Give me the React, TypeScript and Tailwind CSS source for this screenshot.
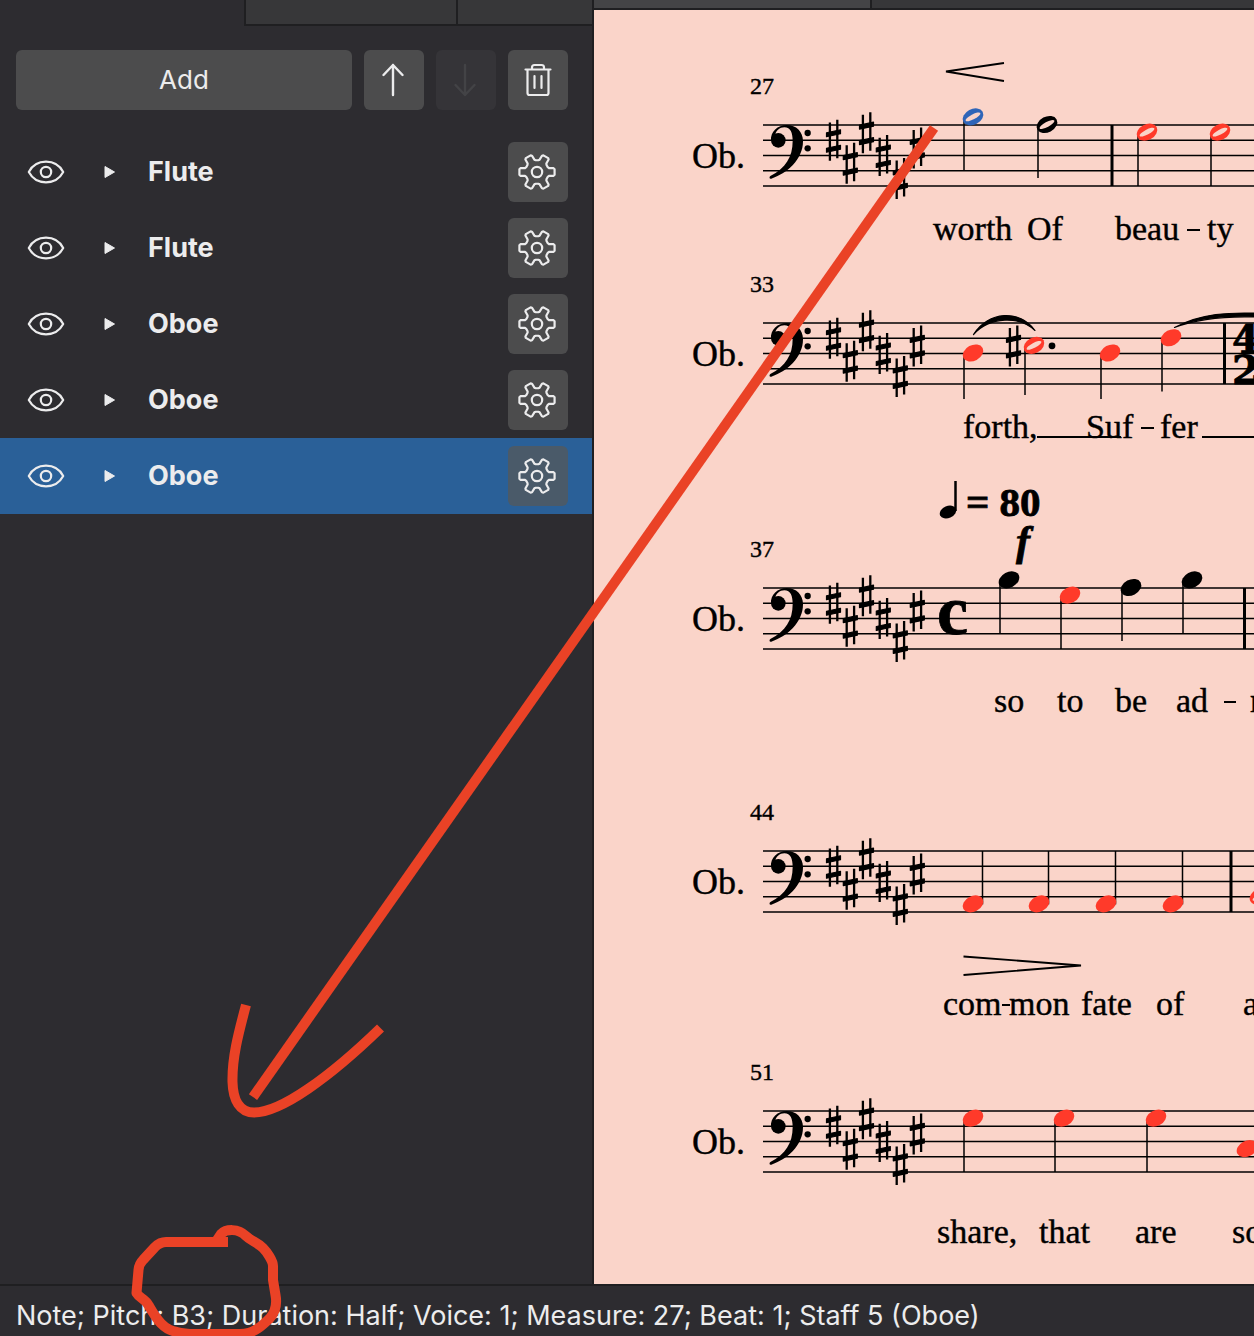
import React from "react";

type Tone = "black" | "red" | "blue";
type Note = { x: number; step: number; tone: Tone; half?: boolean; stem: number; up?: boolean };
type Word = { x: number; text: string };
type Rule = { x1: number; x2: number; y: number };

const TONES: Record<Tone, string> = { black: "#000000", red: "#ff3a2a", blue: "#2f65b8" };
const SPACE = 15.25;
const stepY = (step: number) => (step * SPACE) / 2;

/* ---------- interface icons ---------- */

const GEAR_POINTS = Array.from({ length: 6 }, (_, k) => {
  const at = (deg: number, r: number) => {
    const a = ((k * 60 + deg) * Math.PI) / 180;
    return `${(r * Math.cos(a)).toFixed(2)},${(r * Math.sin(a)).toFixed(2)}`;
  };
  return [at(-13, 17), at(-9, 17.8), at(9, 17.8), at(13, 17), at(18, 12.6), at(24, 11.8), at(36, 11.8), at(42, 12.6)].join(" ");
}).join(" ");

function GearIcon() {
  return (
    <svg width="40" height="40" viewBox="-19 -20 40 40" fill="none" stroke="#ececed" strokeWidth="2.200" strokeLinejoin="round">
      <polygon points={GEAR_POINTS} />
      <circle r="5.2" />
    </svg>
  );
}

function EyeIcon() {
  return (
    <svg width="40" height="28" viewBox="-20 -14 40 28" fill="none" stroke="#ececed" strokeWidth="2.200" strokeLinejoin="round">
      <path d="M-17.200 0C-14 -6 -8 -10.300 0 -10.300S14 -6 17.200 0C14 6 8 10.300 0 10.300S-14 6 -17.200 0Z" />
      <circle r="5.2" />
    </svg>
  );
}

function ArrowIcon({ down }: { down?: boolean }) {
  return (
    <svg width="24" height="34" viewBox="-11 -17 24 34" fill="none" stroke={down ? "#434346" : "#ececed"} strokeWidth="2.400" strokeLinecap="round" strokeLinejoin="round">
      {down ? <path d="M0 -15V15M-9.500 5L0 15L9.500 5" /> : <path d="M0 15V-15M-9.500 -5L0 -15L9.500 -5" />}
    </svg>
  );
}

function TrashIcon() {
  return (
    <svg width="30" height="34" viewBox="-15 -17 30 34" fill="none" stroke="#ececed" strokeWidth="2.200" strokeLinecap="round" strokeLinejoin="round">
      <path d="M-12.500 -10.500H12.500M-10.500 -10.500V13Q-10.500 15 -8.500 15H8.500Q10.500 15 10.500 13V-10.500M-6 -11V-12.500Q-6 -15 -3.500 -15H3.500Q6 -15 6 -12.500V-11M-3.500 -4V8M3.500 -4V8" />
    </svg>
  );
}

/* ---------- score glyphs ---------- */

function Clef() {
  return (
    <g transform="translate(161 -18) scale(0.3333)">
      <path d="M48 100C46 74 68 54 95 54C124 54 144 74 144 103C144 158 95 200 49 215C43 217 42 210 46 207C92 184 113 150 113 102C113 78 107 61 88 61C74 61 63 71 61 83Z" />
      <circle cx="70" cy="100" r="22" />
      <circle cx="158" cy="78" r="9.500" />
      <circle cx="158" cy="124" r="9.500" />
    </g>
  );
}

function Sharp({ x, y }: { x: number; y: number }) {
  return (
    <g transform={`translate(${x} ${y})`}>
      <path d="M-3.600 -17.800V20.500M3.800 -20.500V18" stroke="#000" strokeWidth="2.300" />
      <path d="M-7 -7.500L7 -10.500V-6.500L-7 -3.500ZM-7 8L7 5V9L-7 12Z" stroke="#000" strokeWidth="1.200" strokeLinejoin="round" />
    </g>
  );
}

function NoteMark({ note }: { note: Note }) {
  const y = stepY(note.step);
  const stemX = note.up ? note.x + 9.5 : note.x - 9;
  return (
    <g>
      <path d={`M${stemX} ${y}V${note.stem}`} stroke="#000" strokeWidth="1.500" />
      <g transform={`translate(${note.x} ${y - 0.5}) rotate(-28)`}>
        <ellipse rx="10.900" ry="7.800" fill={TONES[note.tone]} />
        {note.half && <ellipse rx="8.300" ry="2.500" fill="#fad4c9" />}
      </g>
    </g>
  );
}

const KEY_SIGNATURE = [
  [239.5, 2],
  [256.3, 5],
  [272.5, 1],
  [289.3, 4],
  [306.3, 7],
  [323.3, 3],
];

type SystemProps = {
  height: string;
  top: number;
  number: string;
  notes: Note[];
  bar?: number;
  lyricY: number;
  words: Word[];
  rules?: Rule[];
  children?: React.ReactNode;
};

function System({ height, top, number, notes, bar, lyricY, words, rules = [], children }: SystemProps) {
  return (
    <svg className={`block w-full shrink-0 overflow-hidden font-['Liberation_Serif',serif] ${height}`} role="img" aria-label={`Oboe, measure ${number}`}>
      <g transform={`translate(0 ${top})`}>
        {[0, 1, 2, 3, 4].map((i) => (
          <line key={i} x1="169" x2="100%" y1={i * SPACE} y2={i * SPACE} stroke="#000" strokeWidth="1.600" />
        ))}
        {bar && <line x1={bar} x2={bar} y1="0" y2={SPACE * 4} stroke="#000" strokeWidth="3" />}
        <Clef />
        {KEY_SIGNATURE.map(([x, step]) => (
          <Sharp key={x} x={x} y={stepY(step)} />
        ))}
        {notes.map((note) => (
          <NoteMark key={note.x} note={note} />
        ))}
        <g stroke="#000" strokeWidth="0.400">
          <text x="156" y="-31" fontSize="24">{number}</text>
          <text x="98" y="43" fontSize="36">Ob.</text>
          {words.map((word) => (
            <text key={word.x} x={word.x} y={lyricY} fontSize="34">{word.text}</text>
          ))}
        </g>
        {rules.map((rule) => (
          <line key={rule.x1} x1={rule.x1} x2={rule.x2} y1={rule.y} y2={rule.y} stroke="#000" strokeWidth="2" />
        ))}
        {children}
      </g>
    </svg>
  );
}

function Score() {
  return (
    <main className="flex min-h-0 flex-1 flex-col overflow-hidden bg-[#fad4c9]">
      <System
        height="h-[240px]"
        top={115}
        number="27"
        bar={518}
        lyricY={115}
        notes={[
          { x: 379, step: -1, tone: "blue", half: true, stem: 45.5 },
          { x: 453, step: 0, tone: "black", half: true, stem: 53 },
          { x: 553, step: 1, tone: "red", half: true, stem: 61 },
          { x: 626, step: 1, tone: "red", half: true, stem: 61 },
        ]}
        words={[{ x: 339, text: "worth" }, { x: 433, text: "Of" }, { x: 521, text: "beau" }, { x: 613, text: "ty" }]}
        rules={[{ x1: 593, x2: 606, y: 105 }]}
      >
        <path d="M410 -62L352 -53.500L410 -44" fill="none" stroke="#000" strokeWidth="1.800" />
      </System>
      <System
        height="h-[210px]"
        top={73}
        number="33"
        bar={630.5}
        lyricY={115}
        notes={[
          { x: 379, step: 4, tone: "red", stem: 76 },
          { x: 440, step: 3, tone: "red", half: true, stem: 72 },
          { x: 516, step: 4, tone: "red", stem: 76 },
          { x: 577, step: 2, tone: "red", stem: 68.5 },
        ]}
        words={[{ x: 369, text: "forth," }, { x: 492, text: "Suf" }, { x: 566, text: "fer" }]}
        rules={[
          { x1: 443, x2: 527, y: 114 },
          { x1: 547, x2: 560, y: 105 },
          { x1: 608, x2: 700, y: 114 },
        ]}
      >
        <Sharp x={419.5} y={stepY(3)} />
        <circle cx="458" cy="22.800" r="3.400" />
        <path d="M379.500 11.500C394 -12 426 -14 441 7.500C426 -7 396 -7 379.500 11.500Z" stroke="#000" strokeWidth="1.200" strokeLinejoin="round" />
        <path d="M580.500 4.500C606 -9 632 -12 680 -9V-5C640 -8 608 -6 580.500 4.500Z" stroke="#000" strokeWidth="1.200" strokeLinejoin="round" />
        <g className="font-['DejaVu_Serif',serif] font-bold" fontSize="40" stroke="#000" strokeWidth="0.800">
          <text x="638" y="30">4</text>
          <text x="638" y="61">2</text>
        </g>
      </System>
      <System
        height="h-[280px]"
        top={128}
        number="37"
        bar={650.5}
        lyricY={124}
        notes={[
          { x: 415, step: -1, tone: "black", stem: 45.5 },
          { x: 476, step: 1, tone: "red", stem: 61 },
          { x: 537, step: 0, tone: "black", stem: 53 },
          { x: 598, step: -1, tone: "black", stem: 45.5 },
        ]}
        words={[{ x: 400, text: "so" }, { x: 463, text: "to" }, { x: 521, text: "be" }, { x: 582, text: "ad" }, { x: 656, text: "mired" }]}
        rules={[{ x1: 630, x2: 642, y: 114 }]}
      >
        <g transform="translate(354 -76)">
          <ellipse rx="8.600" ry="6" transform="rotate(-24)" />
          <path d="M7.500 -1V-31" stroke="#000" strokeWidth="2.500" />
        </g>
        <g className="font-bold" stroke="#000" strokeWidth="0.800">
          <text x="372" y="-72" fontSize="41">= 80</text>
          <text x="422" y="-33" fontSize="42" className="italic">f</text>
          <text x="343" y="46" fontSize="70">c</text>
        </g>
      </System>
      <System
        height="h-[290px]"
        top={111}
        number="44"
        bar={637}
        lyricY={164}
        notes={[
          { x: 379, step: 7, tone: "red", stem: 0, up: true },
          { x: 445, step: 7, tone: "red", stem: 0, up: true },
          { x: 512, step: 7, tone: "red", stem: 0, up: true },
          { x: 579, step: 7, tone: "red", stem: 0, up: true },
          { x: 666, step: 6, tone: "red", half: true, stem: -8, up: true },
        ]}
        words={[{ x: 349, text: "com" }, { x: 415, text: "mon" }, { x: 487, text: "fate" }, { x: 562, text: "of" }, { x: 649, text: "a" }]}
        rules={[{ x1: 408, x2: 416, y: 154 }]}
      >
        <path d="M369.500 105.500L487 114.500L369.500 124" fill="none" stroke="#000" strokeWidth="1.800" />
      </System>
      <System
        height="h-[254px]"
        top={81}
        number="51"
        lyricY={132}
        notes={[
          { x: 379, step: 1, tone: "red", stem: 61 },
          { x: 470, step: 1, tone: "red", stem: 61 },
          { x: 562, step: 1, tone: "red", stem: 61 },
          { x: 653, step: 5, tone: "red", stem: -15, up: true },
        ]}
        words={[{ x: 343, text: "share," }, { x: 445, text: "that" }, { x: 541, text: "are" }, { x: 638, text: "so" }]}
      />
    </main>
  );
}

/* ---------- instruments panel ---------- */

const INSTRUMENTS = ["Flute", "Flute", "Oboe", "Oboe", "Oboe"];
const SELECTED = 4;

function InstrumentsPanel() {
  const square = "flex h-[60px] w-[60px] shrink-0 items-center justify-center rounded-md";
  return (
    <aside className="flex w-[594px] shrink-0 flex-col border-r-2 border-[#1f1f21] bg-[#2d2c30]">
      <div role="tablist" className="ml-[244px] flex h-[26px] shrink-0 border-b-2 border-l-2 border-[#1f1f21] bg-[#373739]">
        <button role="tab" aria-label="Palettes" className="w-[212px] border-r-2 border-[#1f1f21]" />
        <button role="tab" aria-label="Properties" className="flex-1" />
      </div>
      <div className="flex gap-3 py-6 pr-6 pl-4">
        <button className="h-[60px] flex-1 rounded-md bg-[#4c4c4d] text-[26px]">Add</button>
        <button aria-label="Move up" className={`${square} bg-[#4c4c4d]`}><ArrowIcon /></button>
        <button aria-label="Move down" disabled className={`${square} bg-[#353438]`}><ArrowIcon down /></button>
        <button aria-label="Delete" className={`${square} bg-[#4c4c4d]`}><TrashIcon /></button>
      </div>
      <ul>
        {INSTRUMENTS.map((name, i) => (
          <li key={i} className={`flex h-[76px] items-center pr-6 pl-[26px] ${i === SELECTED ? "bg-[#2a6098]" : ""}`}>
            <button aria-label={`Show ${name}`}><EyeIcon /></button>
            <button aria-label={`Expand ${name}`} className="ml-9 flex w-[46px] items-center">
              <svg width="16" height="16" viewBox="0 0 16 16" fill="#ececed" stroke="#ececed" strokeLinejoin="round">
                <path d="M3 2.500L12.500 8L3 13.500Z" />
              </svg>
            </button>
            <span className="flex-1 font-bold">{name}</span>
            <button aria-label={`${name} settings`} className={`${square} ${i === SELECTED ? "bg-[#4a5a69]" : "bg-[#4c4c4d]"}`}>
              <GearIcon />
            </button>
          </li>
        ))}
      </ul>
    </aside>
  );
}

function Annotations() {
  return (
    <svg aria-hidden="true" className="pointer-events-none absolute inset-0 h-full w-full" fill="none" stroke="#ea4226" strokeWidth="10">
      <path d="M934 128L253 1097" />
      <path d="M246 1005C238 1035 232 1058 232.500 1082C233 1100 240 1112.500 254 1112.500C281 1112.500 330 1077 380.500 1028" />
      <path
        strokeLinejoin="round"
        d="M228 1242H166Q160 1242 155 1247L143 1260Q139 1264 138.500 1270L136.500 1293C140 1299 145 1298 149 1306C157 1320 164 1330 177 1332Q184 1334 195 1334H240C254 1334 263 1325 270 1318C276 1311 277 1303 275.500 1295L273 1280V1266C273 1261 267 1252 263 1248C257 1242 251 1241 246 1236C238 1228 226 1229 221 1234L217 1240"
      />
    </svg>
  );
}

export default function App() {
  return (
    <div className="relative flex min-h-screen flex-col overflow-hidden bg-[#2d2c30] font-['Inter',sans-serif] text-[27px] leading-8 text-[#ececed]">
      <div className="flex flex-1">
        <InstrumentsPanel />
        <div className="flex min-w-0 flex-1 flex-col">
          <div className="flex h-[10px] shrink-0 border-b-2 border-[#1f1f21] bg-[#373739]">
            <div className="w-[278px] border-r-2 border-[#1f1f21] bg-[#444446]" />
          </div>
          <Score />
        </div>
      </div>
      <footer className="flex h-[52px] shrink-0 items-center border-t-2 border-[#1f1f21] px-4 pt-2.5">
        <p className="whitespace-nowrap">Note; Pitch: B3; Duration: Half; Voice: 1; Measure: 27; Beat: 1; Staff 5 (Oboe)</p>
      </footer>
      <Annotations />
    </div>
  );
}
